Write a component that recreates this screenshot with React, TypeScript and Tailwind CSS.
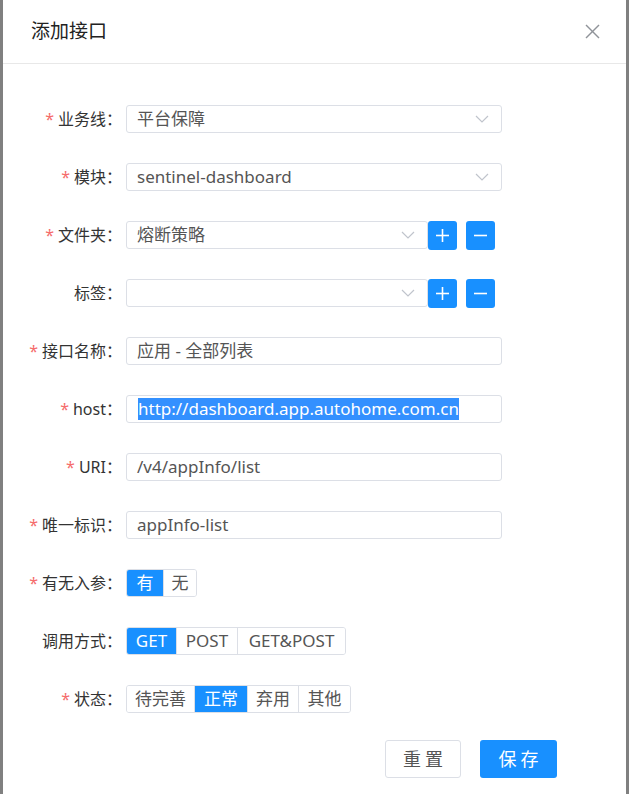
import React from 'react';

const font = { fontFamily: '"Noto Sans", "Noto Sans CJK SC", sans-serif' };

function Chevron() {
  return (
    <svg width="14" height="8" viewBox="0 0 14 8" className="shrink-0">
      <polyline points="1,1 7,7 13,1" fill="none" stroke="#c0c4cc" strokeWidth="1.2" />
    </svg>
  );
}

function Label({ text, required }: { text: string; required?: boolean }) {
  return (
    <div className="w-[123px] shrink-0 pr-[4px] text-right text-[16px] text-[#333] whitespace-nowrap">
      {required && <span className="text-[#f56c6c] mr-[4px]">*</span>}
      {text}：
    </div>
  );
}

function Row({ label, required, children }: { label: string; required?: boolean; children: React.ReactNode }) {
  return (
    <div className="flex items-center h-[28px]">
      <Label text={label} required={required} />
      {children}
    </div>
  );
}

function Select({ value, width }: { value?: string; width: string }) {
  return (
    <div className={`${width} h-[28px] flex items-center justify-between pl-[10px] pr-[12px] border border-[#dcdfe6] rounded-[3px] text-[17px] text-[#555]`}>
      <span>{value}</span>
      <Chevron />
    </div>
  );
}

function Input({ value }: { value: string }) {
  return (
    <div className="w-[376px] h-[28px] flex items-center pl-[10px] border border-[#dcdfe6] rounded-[3px] text-[17px] text-[#555]">
      {value}
    </div>
  );
}

function IconBtn({ kind }: { kind: 'plus' | 'minus' }) {
  return (
    <div className="w-[29px] h-[29px] rounded-[3px] bg-[#1890ff] flex items-center justify-center">
      <svg width="15" height="15" viewBox="0 0 15 15">
        {kind === 'plus' && <line x1="7.5" y1="1" x2="7.5" y2="14" stroke="#fff" strokeWidth="1.6" />}
        <line x1="1" y1="7.5" x2="14" y2="7.5" stroke="#fff" strokeWidth="1.6" />
      </svg>
    </div>
  );
}

function Segmented({ items, active }: { items: { t: string; w: string }[]; active: number }) {
  return (
    <div className="flex h-[28px] border border-[#dcdfe6] rounded-[3px] overflow-hidden text-[17px]">
      {items.map((it, i) => (
        <div
          key={it.t}
          className={`${it.w} flex items-center justify-center ${i > 0 ? 'border-l border-[#dcdfe6]' : ''} ${
            i === active ? 'bg-[#1890ff] text-white' : 'bg-white text-[#555]'
          }`}
        >
          {it.t}
        </div>
      ))}
    </div>
  );
}

export default function App() {
  return (
    <div className="w-[629px] h-[794px] bg-[#808080] flex px-[3px]" style={font}>
      <div className="flex-1 bg-white flex flex-col">
        {/* header */}
        <div className="h-[64px] shrink-0 flex items-center justify-between pl-[28px] pr-[26px] border-b border-[#e8e8e8]">
          <span className="text-[19px] text-[#222]">添加接口</span>
          <svg width="15" height="15" viewBox="0 0 15 15">
            <line x1="1" y1="1" x2="14" y2="14" stroke="#909399" strokeWidth="1.4" />
            <line x1="14" y1="1" x2="1" y2="14" stroke="#909399" strokeWidth="1.4" />
          </svg>
        </div>

        {/* form */}
        <div className="flex flex-col gap-[30px] pt-[41px]">
          <Row label="业务线" required>
            <Select value="平台保障" width="w-[376px]" />
          </Row>
          <Row label="模块" required>
            <Select value="sentinel-dashboard" width="w-[376px]" />
          </Row>
          <Row label="文件夹" required>
            <Select value="熔断策略" width="w-[302px]" />
            <div className="flex gap-[9px]">
              <IconBtn kind="plus" />
              <IconBtn kind="minus" />
            </div>
          </Row>
          <Row label="标签">
            <Select width="w-[302px]" />
            <div className="flex gap-[9px]">
              <IconBtn kind="plus" />
              <IconBtn kind="minus" />
            </div>
          </Row>
          <Row label="接口名称" required>
            <Input value="应用 - 全部列表" />
          </Row>
          <Row label="host" required>
            <div className="w-[376px] h-[28px] flex items-center pl-[11px] border border-[#dcdfe6] rounded-[3px] text-[17px]">
              <span className="bg-[#3390ff] text-white leading-[22px]">http://dashboard.app.autohome.com.cn</span>
            </div>
          </Row>
          <Row label="URI" required>
            <Input value="/v4/appInfo/list" />
          </Row>
          <Row label="唯一标识" required>
            <Input value="appInfo-list" />
          </Row>
          <Row label="有无入参" required>
            <Segmented
              active={0}
              items={[
                { t: '有', w: 'w-[36px]' },
                { t: '无', w: 'w-[33px]' },
              ]}
            />
          </Row>
          <Row label="调用方式">
            <Segmented
              active={0}
              items={[
                { t: 'GET', w: 'w-[49px]' },
                { t: 'POST', w: 'w-[61px]' },
                { t: 'GET&POST', w: 'w-[108px]' },
              ]}
            />
          </Row>
          <Row label="状态" required>
            <Segmented
              active={1}
              items={[
                { t: '待完善', w: 'w-[67px]' },
                { t: '正常', w: 'w-[53px]' },
                { t: '弃用', w: 'w-[51px]' },
                { t: '其他', w: 'w-[52px]' },
              ]}
            />
          </Row>
        </div>

        {/* actions */}
        <div className="flex gap-[19px] pl-[382px] mt-[27px]">
          <button className="w-[76px] h-[38px] border border-[#dcdfe6] rounded-[3px] bg-white text-[18px] text-[#555] tracking-[4px] pl-[4px]">
            重置
          </button>
          <button className="w-[77px] h-[38px] rounded-[3px] bg-[#1890ff] text-[18px] text-white tracking-[4px] pl-[4px]">
            保存
          </button>
        </div>
      </div>
    </div>
  );
}
